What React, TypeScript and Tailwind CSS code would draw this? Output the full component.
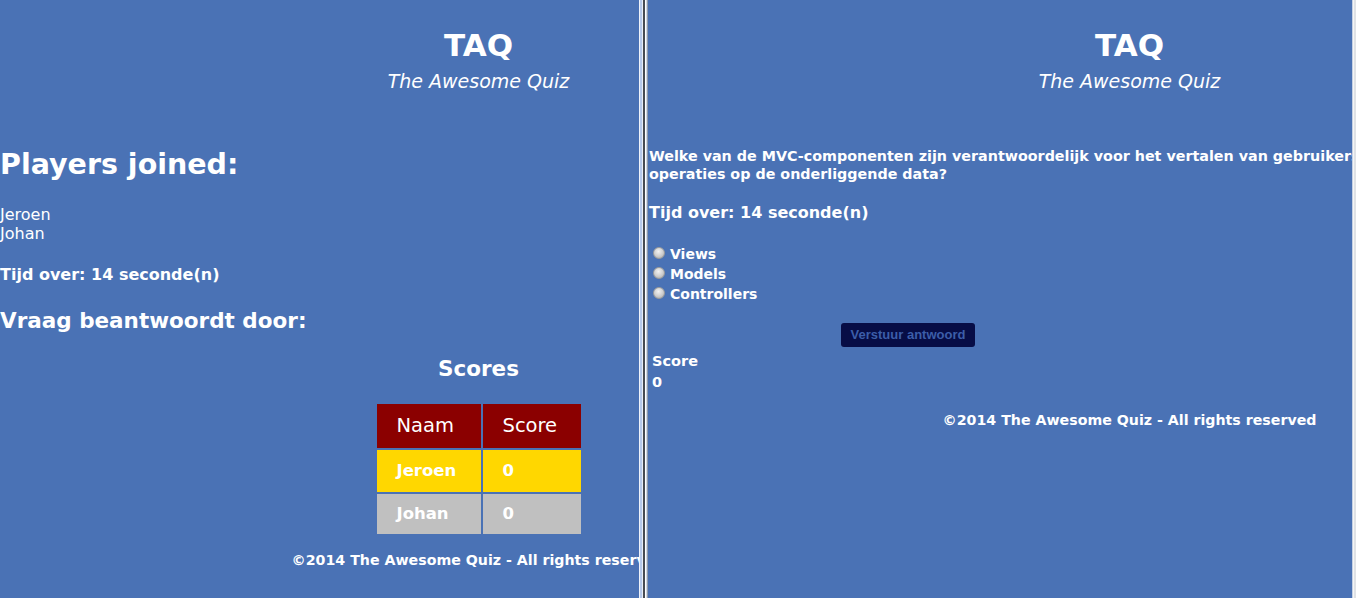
import React from 'react';

/* ──────────────────────────────
   Gedeelde stukken (header / footer)
   ────────────────────────────── */
function QuizHeader() {
  return (
    <header className="pt-[25px] text-center">
      <h1 className="text-[31px] leading-[40px] font-bold">TAQ</h1>
      <p className="mt-[4px] text-[19px] leading-[24px] italic">The Awesome Quiz</p>
    </header>
  );
}

function QuizFooter({ className = '' }: { className?: string }) {
  return (
    <footer className={`text-center text-[14.2px] leading-[20px] font-bold whitespace-nowrap ${className}`}>
      ©2014 The Awesome Quiz - All rights reserved
    </footer>
  );
}

const players = ['Jeroen', 'Johan'];

const scores = [
  { name: 'Jeroen', score: 0, row: 'bg-[#ffd700] h-[42px]' },
  { name: 'Johan', score: 0, row: 'bg-[#c0c0c0] h-[40px]' },
];

/* ──────────────────────────────
   Linker venster: host / lobby
   ────────────────────────────── */
function HostPane() {
  return (
    <div className="w-[957px] shrink-0">
      <QuizHeader />

      <h2 className="mt-[55px] text-[28.5px] leading-[34px] font-bold">Players joined:</h2>
      <ul className="mt-[23px] text-[16px] leading-[19px]">
        {players.map(p => (
          <li key={p}>{p}</li>
        ))}
      </ul>

      <p className="mt-[22px] text-[16px] leading-[20px] font-bold">Tijd over: 14 seconde(n)</p>
      <h2 className="mt-[23px] text-[21.5px] leading-[26px] font-bold">Vraag beantwoordt door:</h2>

      <h2 className="mt-[22px] text-center text-[21.5px] leading-[26px] font-bold">Scores</h2>
      <table className="mx-auto mt-[20px] border-separate border-spacing-[2px]">
        <thead>
          <tr className="bg-[#8b0000] h-[44px]">
            <th className="w-[104px] pl-5 text-left text-[19.5px] font-normal">Naam</th>
            <th className="w-[98px] pl-5 text-left text-[19.5px] font-normal">Score</th>
          </tr>
        </thead>
        <tbody>
          {scores.map(s => (
            <tr key={s.name} className={s.row}>
              <td className="pl-5 text-[16.5px] font-bold">{s.name}</td>
              <td className="pl-5 text-[16.5px] font-bold">{s.score}</td>
            </tr>
          ))}
        </tbody>
      </table>

      <QuizFooter className="mt-[14px]" />
    </div>
  );
}

/* ──────────────────────────────
   Rechter venster: speler / vraag
   ────────────────────────────── */
function RadioBall() {
  return (
    <span className="mt-[3px] ml-[5px] mr-[5px] inline-block h-[12px] w-[12px] shrink-0 rounded-full border border-[#9c9c9c] bg-[radial-gradient(circle_at_45%_35%,#f2f2f2,#cdcdcd_55%,#a2a2a2)]" />
  );
}

const answers = ['Views', 'Models', 'Controllers'];

function PlayerPane() {
  return (
    <div className="w-[963px] shrink-0">
      <QuizHeader />

      <p className="mt-[54px] pl-px text-[14.3px] leading-[18px] font-bold">
        Welke van de MVC-componenten zijn verantwoordelijk voor het vertalen van gebruikers-
        <br />
        operaties op de onderliggende data?
      </p>
      <p className="mt-[20px] pl-px text-[16px] leading-[20px] font-bold">Tijd over: 14 seconde(n)</p>

      <div className="mt-[21px] text-[14px] leading-[20px] font-bold">
        {answers.map(a => (
          <label key={a} className="flex items-start">
            <RadioBall />
            <span>{a}</span>
          </label>
        ))}
      </div>

      <button
        type="button"
        className="mt-[19px] ml-[193px] h-[24px] w-[134px] rounded-[3px] bg-[#070d46] font-['Liberation_Sans',Arial,sans-serif] text-[13px] font-bold text-[#3c5ea9]"
      >
        Verstuur antwoord
      </button>

      <div className="mt-[4px] pl-[4px] text-[14.5px] font-bold">
        <p className="leading-[20px]">Score</p>
        <p className="leading-[22px]">0</p>
      </div>

      <QuizFooter className="mt-[17px]" />
    </div>
  );
}

export default function App() {
  return (
    <div className="flex h-screen w-full overflow-hidden bg-[#4a72b5] font-['DejaVu_Sans',sans-serif] text-white">
      <div className="w-[639px] shrink-0 overflow-hidden">
        <HostPane />
      </div>

      {/* scheiding tussen de twee vensters */}
      <div className="flex w-[9px] shrink-0">
        <div className="w-px bg-[#eef2fa]" />
        <div className="w-[2px] bg-[#b5c8ea]" />
        <div className="w-px bg-[#e6ecf6]" />
        <div className="w-[2px] bg-[#474b52]" />
        <div className="w-px bg-[#ffffff]" />
        <div className="w-px bg-[#cfd8e6]" />
        <div className="w-px bg-[#8e99ab]" />
      </div>

      <div className="w-[704px] shrink-0 overflow-hidden">
        <PlayerPane />
      </div>

      <div className="flex w-[4px] shrink-0">
        <div className="w-px bg-[#c6d1e3]" />
        <div className="w-px bg-[#f5f5f5]" />
        <div className="w-[2px] bg-[#dfe2e6]" />
      </div>
    </div>
  );
}
